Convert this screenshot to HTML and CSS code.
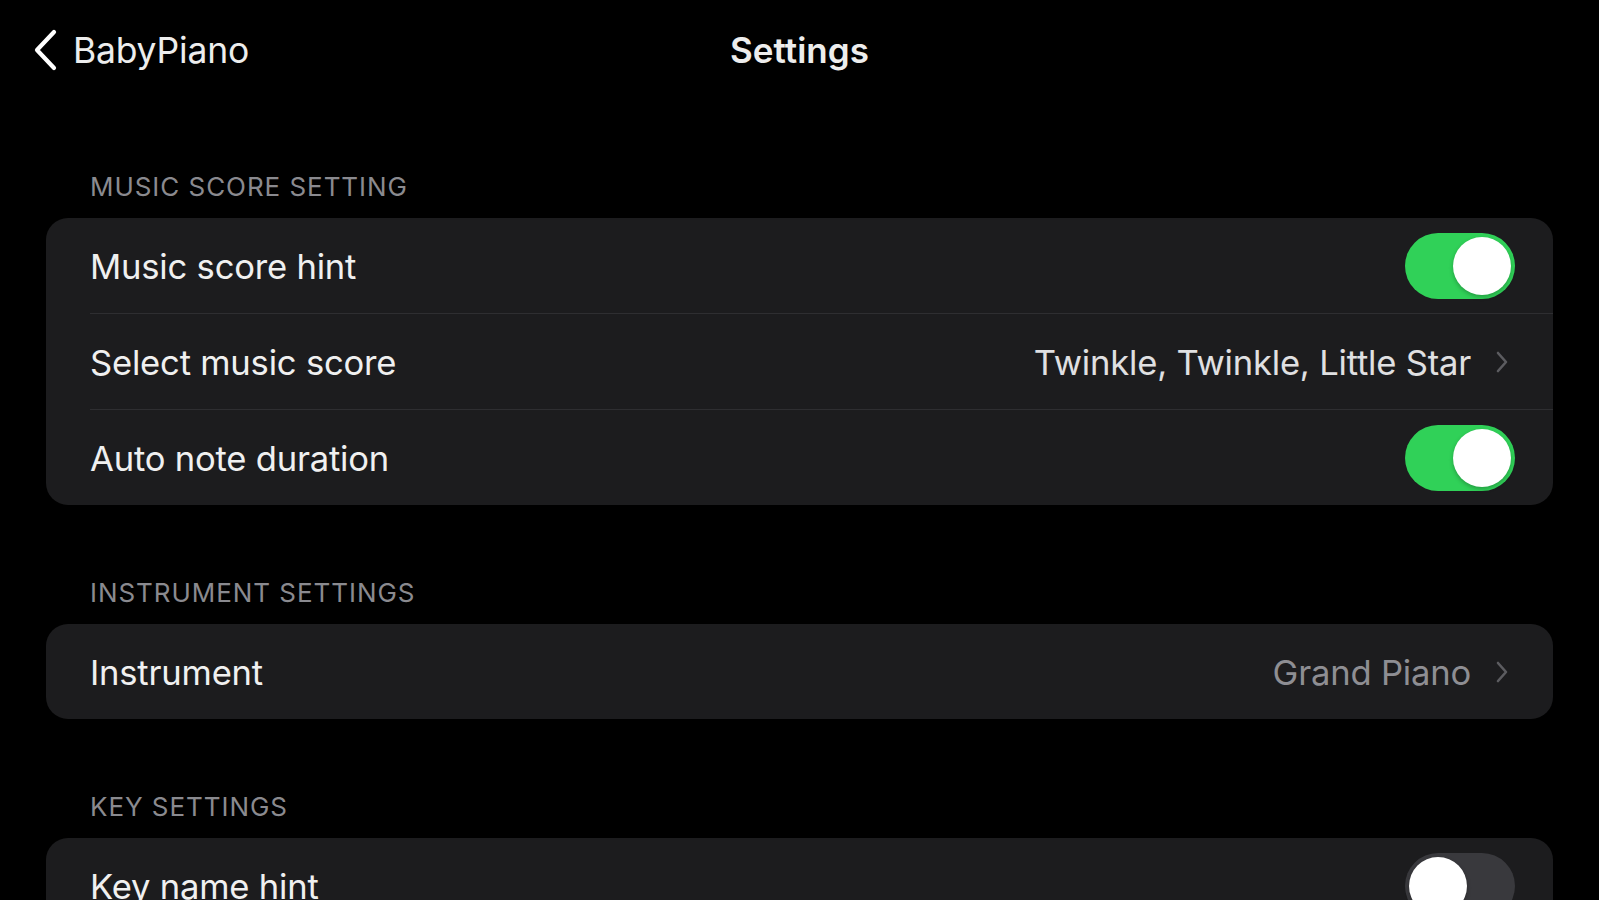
FILE: index.html
```html
<!DOCTYPE html>
<html lang="en">
<head>
<meta charset="utf-8">
<title>Settings</title>
<link rel="stylesheet" href="styles.css">
</head>
<body>
<header class="nav">
  <div class="nav-left">
    <svg class="back-icon" width="28" height="44" viewBox="0 0 28 44" aria-hidden="true">
      <path d="M23 4 L6 22 L23 40" fill="none" stroke="#ffffff" stroke-width="4.2" stroke-linecap="round" stroke-linejoin="round"/>
    </svg>
    <span class="back-text">BabyPiano</span>
  </div>
  <div class="nav-title">Settings</div>
  <div class="nav-right"></div>
</header>

<main class="content">
  <section class="group">
    <div class="group-label">MUSIC SCORE SETTING</div>
    <div class="card">
      <div class="row">
        <span class="row-label">Music score hint</span>
        <span class="toggle on"><span class="knob"></span></span>
      </div>
      <div class="sep"></div>
      <div class="row">
        <span class="row-label">Select music score</span>
        <span class="row-trail">
          <span class="row-value bright">Twinkle, Twinkle, Little Star</span>
          <svg class="chev" width="14" height="24" viewBox="0 0 14 24" aria-hidden="true"><path d="M3 3 L11 12 L3 21" fill="none" stroke="#5c5c60" stroke-width="2.6" stroke-linecap="round" stroke-linejoin="round"/></svg>
        </span>
      </div>
      <div class="sep"></div>
      <div class="row">
        <span class="row-label">Auto note duration</span>
        <span class="toggle on"><span class="knob"></span></span>
      </div>
    </div>
  </section>

  <section class="group">
    <div class="group-label">INSTRUMENT SETTINGS</div>
    <div class="card">
      <div class="row">
        <span class="row-label">Instrument</span>
        <span class="row-trail">
          <span class="row-value">Grand Piano</span>
          <svg class="chev" width="14" height="24" viewBox="0 0 14 24" aria-hidden="true"><path d="M3 3 L11 12 L3 21" fill="none" stroke="#5c5c60" stroke-width="2.6" stroke-linecap="round" stroke-linejoin="round"/></svg>
        </span>
      </div>
    </div>
  </section>

  <section class="group">
    <div class="group-label">KEY SETTINGS</div>
    <div class="card">
      <div class="row">
        <span class="row-label">Key name hint</span>
        <span class="toggle"><span class="knob"></span></span>
      </div>
    </div>
  </section>
</main>
</body>
</html>
```

FILE: styles.css
```css
* { box-sizing: border-box; }

html, body {
  margin: 0;
  padding: 0;
  background: #000000;
  height: 100%;
  overflow: hidden;
}

body {
  font-family: Inter, "Noto Sans", "Liberation Sans", sans-serif;
  color: #ffffff;
  -webkit-font-smoothing: antialiased;
}

.nav {
  height: 100px;
  display: grid;
  grid-template-columns: 1fr auto 1fr;
  align-items: center;
  padding: 0 31px;
}

.nav-left {
  display: flex;
  align-items: center;
  gap: 14px;
}

.back-icon { display: block; }

.back-text {
  font-size: 35.5px;
  letter-spacing: -0.2px;
  color: #ededed;
}

.nav-title {
  font-size: 35px;
  font-weight: 560;
  color: #ededed;
  letter-spacing: 0px;
}

.content {
  padding: 72px 46px 0;
  display: flex;
  flex-direction: column;
  gap: 73px;
}

.group {
  display: flex;
  flex-direction: column;
  gap: 16px;
}

.group-label {
  padding-left: 44px;
  font-size: 26px;
  line-height: 30px;
  color: #8a8a8f;
  letter-spacing: 0.95px;
}

.card {
  background: #1c1c1e;
  border-radius: 22px;
  overflow: hidden;
}

.row {
  height: 95px;
  display: flex;
  align-items: center;
  justify-content: space-between;
  padding: 0 38px 0 44px;
}

.row-label {
  font-size: 34.6px;
  font-weight: 430;
  color: #f0f0f0;
  letter-spacing: -0.2px;
}

.sep {
  height: 1px;
  margin-left: 44px;
  background: #2e2e31;
}

.row-trail {
  display: flex;
  align-items: center;
  gap: 24px;
  padding-right: 6px;
}

.row-value {
  font-size: 34.6px;
  font-weight: 430;
  color: #8e8e93;
  letter-spacing: -0.2px;
}

.row-value.bright { color: #e0e0e2; }

.chev { display: block; }

.toggle {
  width: 110px;
  height: 66px;
  border-radius: 33px;
  background: #39393d;
  padding: 4px;
  display: flex;
  justify-content: flex-start;
}

.toggle.on {
  background: #30d158;
  justify-content: flex-end;
}

.knob {
  width: 58px;
  height: 58px;
  border-radius: 50%;
  background: #ffffff;
  box-shadow: 0 2px 4px rgba(0,0,0,0.25);
}
```
